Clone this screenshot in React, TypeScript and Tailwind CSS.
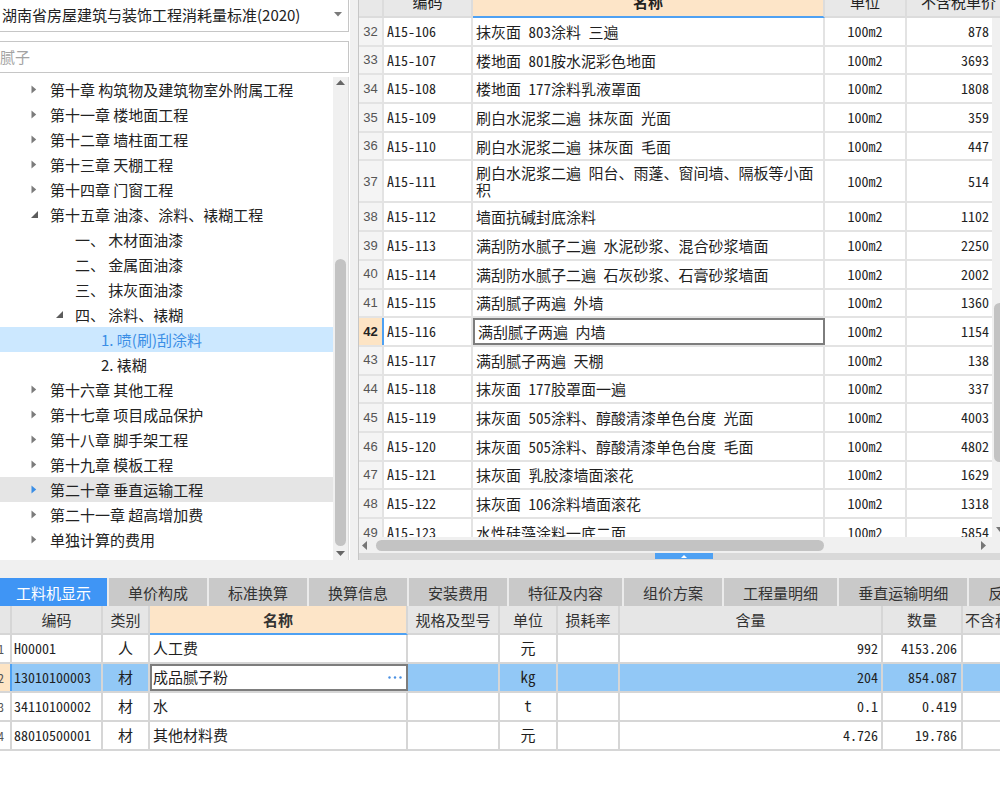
import React from "react";

const ui = "font-['Noto_Sans_CJK_SC','Noto_Sans',sans-serif]";
const mono = "font-['Noto_Sans_Mono_CJK_SC','Noto_Sans_CJK_SC',monospace]";

type TreeNode = {
  label: string;
  level: 0 | 1 | 2;
  arrow?: "right" | "down";
  selected?: boolean;
  hover?: boolean;
};

const tree: TreeNode[] = [
  { label: "第十章 构筑物及建筑物室外附属工程", level: 0, arrow: "right" },
  { label: "第十一章 楼地面工程", level: 0, arrow: "right" },
  { label: "第十二章 墙柱面工程", level: 0, arrow: "right" },
  { label: "第十三章 天棚工程", level: 0, arrow: "right" },
  { label: "第十四章 门窗工程", level: 0, arrow: "right" },
  { label: "第十五章 油漆、涂料、裱糊工程", level: 0, arrow: "down" },
  { label: "一、 木材面油漆", level: 1 },
  { label: "二、 金属面油漆", level: 1 },
  { label: "三、 抹灰面油漆", level: 1 },
  { label: "四、 涂料、裱糊", level: 1, arrow: "down" },
  { label: "1. 喷(刷)刮涂料", level: 2, selected: true },
  { label: "2. 裱糊", level: 2 },
  { label: "第十六章 其他工程", level: 0, arrow: "right" },
  { label: "第十七章 项目成品保护", level: 0, arrow: "right" },
  { label: "第十八章 脚手架工程", level: 0, arrow: "right" },
  { label: "第十九章 模板工程", level: 0, arrow: "right" },
  { label: "第二十章 垂直运输工程", level: 0, arrow: "right", hover: true },
  { label: "第二十一章 超高增加费", level: 0, arrow: "right" },
  { label: "单独计算的费用", level: 0, arrow: "right" },
];

const quotas = [
  ["32", "A15-106", "抹灰面 803涂料 三遍", "878"],
  ["33", "A15-107", "楼地面 801胺水泥彩色地面", "3693"],
  ["34", "A15-108", "楼地面 177涂料乳液罩面", "1808"],
  ["35", "A15-109", "刷白水泥浆二遍 抹灰面 光面", "359"],
  ["36", "A15-110", "刷白水泥浆二遍 抹灰面 毛面", "447"],
  ["37", "A15-111", "刷白水泥浆二遍 阳台、雨蓬、窗间墙、隔板等小面\n积", "514"],
  ["38", "A15-112", "墙面抗碱封底涂料", "1102"],
  ["39", "A15-113", "满刮防水腻子二遍 水泥砂浆、混合砂浆墙面", "2250"],
  ["40", "A15-114", "满刮防水腻子二遍 石灰砂浆、石膏砂浆墙面", "2002"],
  ["41", "A15-115", "满刮腻子两遍 外墙", "1360"],
  ["42", "A15-116", "满刮腻子两遍 内墙", "1154"],
  ["43", "A15-117", "满刮腻子两遍 天棚", "138"],
  ["44", "A15-118", "抹灰面 177胶罩面一遍", "337"],
  ["45", "A15-119", "抹灰面 505涂料、醇酸清漆单色台度 光面", "4003"],
  ["46", "A15-120", "抹灰面 505涂料、醇酸清漆单色台度 毛面", "4802"],
  ["47", "A15-121", "抹灰面 乳胶漆墙面滚花", "1629"],
  ["48", "A15-122", "抹灰面 106涂料墙面滚花", "1318"],
  ["49", "A15-123", "水性硅藻涂料一底二面", "5854"],
];

const tabs = ["工料机显示", "单价构成", "标准换算", "换算信息", "安装费用", "特征及内容", "组价方案", "工程量明细", "垂直运输明细", "反查"];

const resources = [
  ["1", "H00001", "人", "人工费", "元", "992", "4153.206"],
  ["2", "13010100003", "材", "成品腻子粉", "kg", "204", "854.087"],
  ["3", "34110100002", "材", "水", "t", "0.1", "0.419"],
  ["4", "88010500001", "材", "其他材料费", "元", "4.726", "19.786"],
];

function Caret({ open, active }: { open?: boolean; active?: boolean }) {
  if (open) {
    return (
      <svg width="7" height="7" viewBox="0 0 7 7">
        <path d="M7 0V7H0Z" fill="#5c5c5c" />
      </svg>
    );
  }
  return (
    <svg width="6" height="9" viewBox="0 0 6 9">
      <path d="M0.5 0.5L5.2 4.5L0.5 8.5Z" fill={active ? "#3a8ee6" : "#7b7b7b"} />
    </svg>
  );
}

function TreeRow({ node }: { node: TreeNode }) {
  const pad = node.level === 0 ? "pl-[31px]" : node.level === 1 ? "pl-[56px]" : "pl-[82px]";
  const bg = node.selected ? "bg-[#cce8ff]" : node.hover ? "bg-[#e5e5e5]" : "";
  return (
    <div className={`flex h-[25px] items-center ${pad} ${bg}`}>
      <div className="flex w-[19px] items-center">
        {node.arrow && <Caret open={node.arrow === "down"} active={node.hover} />}
      </div>
      <span className={`whitespace-nowrap text-[15px] leading-none ${node.selected ? "text-[#3a8ee6]" : "text-[#222]"}`}>
        {node.label}
      </span>
    </div>
  );
}

function LeftPanel() {
  return (
    <div className="flex w-[350px] shrink-0 flex-col bg-white">
      <div className="-ml-[1px] -mt-[2px] flex h-[34px] w-[350px] items-center justify-between border border-[#c6c6c6] pl-[2px] pr-[6px]">
        <span className="whitespace-nowrap text-[15px] leading-none text-[#222]">湖南省房屋建筑与装饰工程消耗量标准(2020)</span>
        <svg width="8" height="5" viewBox="0 0 8 5">
          <path d="M0 0H8L4 4.5Z" fill="#7a7a7a" />
        </svg>
      </div>
      <div className="-ml-[1px] mt-[9px] flex h-[32px] w-[350px] items-center border border-[#c6c6c6]">
        <span className="text-[15px] leading-none text-[#a3a3a3]">腻子</span>
      </div>
      <div className="mt-[4px] flex h-[484px] w-[349px] border-r border-[#dcdcdc]">
        <div className="w-[333px] pt-[0.5px]">
          {tree.map((n) => (
            <TreeRow key={n.label} node={n} />
          ))}
        </div>
        <div className="flex w-[15px] flex-col items-center bg-[#f0f0f0]">
          <svg className="mt-[3px]" width="9" height="5" viewBox="0 0 9 5">
            <path d="M0 5H9L4.5 0Z" fill="#666" />
          </svg>
          <div className="mt-[174px] h-[287px] w-[11px] rounded-full bg-[#c3c3c3]" />
          <svg className="mt-[5px]" width="9" height="5" viewBox="0 0 9 5">
            <path d="M0 0H9L4.5 5Z" fill="#666" />
          </svg>
        </div>
      </div>
    </div>
  );
}

function RightPanel() {
  return (
    <div className="ml-[8px] flex w-[642px] shrink-0 flex-col overflow-hidden border-l border-[#c6c6c6] bg-white">
      <div className="h-[537px] shrink-0 overflow-hidden">
        <div className="-mt-[13px] flex h-[31px] w-[700px] text-[15px] leading-none text-[#222] *:shrink-0">
          <div className="w-[25px] border-b-2 border-r-2 border-[#dcdcdc] bg-[#e8e8e8]" />
          <div className="flex w-[89px] items-center justify-center border-b-2 border-r-2 border-[#dcdcdc] bg-[#e8e8e8]">编码</div>
          <div className="flex w-[352px] items-center justify-center border-b-2 border-r-2 border-[#dcdcdc] border-b-[#4ea1f3] bg-[#fde5c8] font-bold">名称</div>
          <div className="flex w-[82px] items-center justify-center border-b-2 border-r-2 border-[#dcdcdc] bg-[#e8e8e8]">单位</div>
          <div className="flex w-[103px] items-center justify-center whitespace-nowrap border-b-2 border-[#dcdcdc] bg-[#e8e8e8]">不含税单价</div>
        </div>
        <div className="flex h-[519px]">
          <div className="w-[633px] shrink-0 overflow-hidden">
            {quotas.map(([no, code, name, price]) => {
              const active = no === "42";
              const tall = no === "37";
              return (
                <div key={no} className={`flex ${tall ? "h-[42px]" : "h-[28.7px]"} border-b-2 border-[#e3e3e3] *:shrink-0`}>
                  <div
                    className={`flex w-[25px] items-center justify-center font-['Liberation_Sans',sans-serif] text-[13px] ${
                      active ? "border-r-2 border-[#4ea1f3] bg-[#fde4c4] font-bold text-[#222]" : "border-r-2 border-[#e3e3e3] bg-[#f4f4f4] text-[#555]"
                    }`}
                  >
                    {no}
                  </div>
                  <div className={`flex w-[89px] items-center border-r-2 border-[#e3e3e3] pl-[3px] text-[14px] ${mono}`}>{code}</div>
                  <div
                    className={`flex w-[352px] items-center whitespace-pre-line pl-[3px] text-[15px] leading-[17px] ${mono} ${
                      active ? "border-2 border-[#7d7d7d] pl-[1px]" : "border-r-2 border-[#e3e3e3]"
                    }`}
                  >
                    {name}
                  </div>
                  <div className={`flex w-[82px] items-center justify-center border-r-2 border-[#e3e3e3] text-[14px] ${mono}`}>100m2</div>
                  <div className={`flex w-[85px] items-center justify-end pr-[3px] text-[14px] ${mono}`}>{price}</div>
                </div>
              );
            })}
          </div>
          <div className="flex w-[17px] shrink-0 flex-col bg-[#f0f0f0] pl-[2px]">
            <div className="mt-[285px] h-[159px] w-[11px] rounded-full bg-[#c3c3c3]" />
            <svg className="ml-[2px] mt-[65px]" width="8" height="5" viewBox="0 0 8 5">
              <path d="M0 0H8L4 5Z" fill="#777" />
            </svg>
          </div>
        </div>
      </div>
      <div className="flex h-[16px] shrink-0 items-center bg-[#f0f0f0] pl-[3px]">
        <svg width="5" height="9" viewBox="0 0 5 9">
          <path d="M5 0V9L0 4.5Z" fill="#777" />
        </svg>
        <div className="ml-[9px] h-[11px] w-[448px] rounded-full bg-[#c3c3c3]" />
        <svg className="ml-[157px]" width="5" height="9" viewBox="0 0 5 9">
          <path d="M0 0V9L5 4.5Z" fill="#777" />
        </svg>
      </div>
      <div className="flex h-[7px] shrink-0 bg-[#d9d9d9] pl-[296px]">
        <div className="flex h-[6px] w-[58px] items-center justify-center bg-[#4ea1f3]">
          <svg width="6" height="3" viewBox="0 0 6 3">
            <path d="M0 3H6L3 0Z" fill="#fff" />
          </svg>
        </div>
      </div>
    </div>
  );
}

function Tabs() {
  return (
    <div className="flex h-[28px] shrink-0 overflow-hidden bg-[#c9c9c9]">
      {tabs.map((t, i) => (
        <div
          key={t}
          className={`flex shrink-0 items-center whitespace-nowrap text-[15px] leading-none ${
            i === 0 ? "bg-[#3f95f5] px-[16px] text-white" : "border-l-2 border-[#ebebeb] px-[19px] text-[#333]"
          }`}
        >
          {t}
        </div>
      ))}
    </div>
  );
}

function Dots() {
  return (
    <svg width="14" height="3" viewBox="0 0 14 3">
      <circle cx="1.5" cy="1.5" r="1.2" fill="#4a90e2" />
      <circle cx="7" cy="1.5" r="1.2" fill="#4a90e2" />
      <circle cx="12.5" cy="1.5" r="1.2" fill="#4a90e2" />
    </svg>
  );
}

function BottomTable() {
  const line = "border-r-2 border-[#d6d6d6]";
  return (
    <div className="flex-1 overflow-hidden bg-white">
      <div className="flex h-[29px] text-[15px] leading-none text-[#333] *:shrink-0">
        <div className={`w-[12px] ${line} border-b-2 bg-[#e6e6e6]`} />
        <div className={`flex w-[91px] items-center justify-center ${line} border-b-2 bg-[#e6e6e6]`}>编码</div>
        <div className={`flex w-[47px] items-center justify-center ${line} border-b-2 bg-[#e6e6e6]`}>类别</div>
        <div className={`flex w-[258px] items-center justify-center ${line} border-b-2 border-b-[#4ea1f3] bg-[#fde5c8] font-bold`}>名称</div>
        <div className={`flex w-[92px] items-center justify-center whitespace-nowrap ${line} border-b-2 bg-[#e6e6e6]`}>规格及型号</div>
        <div className={`flex w-[58px] items-center justify-center ${line} border-b-2 bg-[#e6e6e6]`}>单位</div>
        <div className={`flex w-[62px] items-center justify-center ${line} border-b-2 bg-[#e6e6e6]`}>损耗率</div>
        <div className={`flex w-[263px] items-center justify-center ${line} border-b-2 bg-[#e6e6e6]`}>含量</div>
        <div className={`flex w-[80px] items-center justify-center ${line} border-b-2 bg-[#e6e6e6]`}>数量</div>
        <div className="flex w-[80px] items-center overflow-hidden whitespace-nowrap border-b-2 border-[#d6d6d6] bg-[#e6e6e6] pl-[2px]">不含税单价</div>
      </div>
      {resources.map(([no, code, kind, name, unit, content, qty]) => {
        const active = no === "2";
        return (
          <div key={no} className={`flex h-[29px] border-b-2 border-[#d6d6d6] text-[14px] ${mono} ${active ? "bg-[#92c8f6]" : ""} *:shrink-0`}>
            <div
              className={`flex w-[12px] items-center justify-end overflow-hidden pr-[6px] text-[12px] text-[#555] ${
                active ? "border-r-2 border-[#4ea1f3] bg-[#fde4c4]" : line
              }`}
            >
              {no}
            </div>
            <div className={`flex w-[91px] items-center pl-[2px] ${line}`}>{code}</div>
            <div className={`flex w-[47px] items-center justify-center text-[15px] ${line}`}>{kind}</div>
            <div
              className={`flex w-[258px] items-center justify-between text-[15px] ${
                active ? "border-2 border-[#7d7d7d] bg-white pl-[1px] pr-[4px]" : `${line} pl-[3px]`
              }`}
            >
              <span>{name}</span>
              {active && <Dots />}
            </div>
            <div className={`w-[92px] ${line}`} />
            <div className={`flex w-[58px] items-center justify-center text-[15px] ${line}`}>{unit}</div>
            <div className={`w-[62px] ${line}`} />
            <div className={`flex w-[263px] items-center justify-end pr-[3px] ${line}`}>{content}</div>
            <div className={`flex w-[80px] items-center justify-end pr-[4px] ${line}`}>{qty}</div>
            <div className="w-[80px]" />
          </div>
        );
      })}
    </div>
  );
}

export default function App() {
  return (
    <div className={`flex h-[792px] w-[1000px] flex-col overflow-hidden bg-white text-[#1f1f1f] ${ui}`}>
      <div className="flex h-[560px] shrink-0 bg-[#f0f0f0]">
        <LeftPanel />
        <RightPanel />
      </div>
      <div className="h-[18px] shrink-0 bg-[#f0f0f0]" />
      <Tabs />
      <BottomTable />
    </div>
  );
}
